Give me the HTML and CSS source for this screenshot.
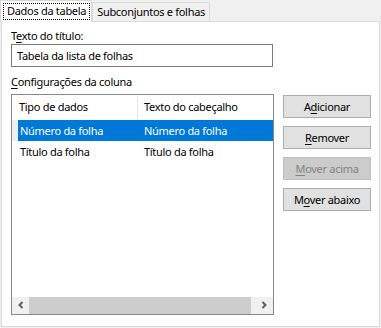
FILE: index.html
```html
<!DOCTYPE html>
<html lang="pt">
<head>
    <meta charset="UTF-8">
    <title>Dados da tabela</title>
    <link rel="stylesheet" href="styles.css">
</head>
<body>
    <div class="tabs">
        <div class="tab active"><span class="focus">Dados da tabela</span></div>
        <div class="tab">Subconjuntos e folhas</div>
    </div>
    <div class="panel">
        <label class="field-label">T<u>e</u>xto do título:</label>
        <div class="text-input">Tabela da lista de folhas</div>

        <label class="field-label second"><u>C</u>onfigurações da coluna</label>
        <div class="columns-area">
            <div class="listview">
                <div class="lv-header">
                    <div class="lv-head first">Tipo de dados</div>
                    <div class="lv-head">Texto do cabeçalho</div>
                </div>
                <div class="lv-body">
                    <div class="lv-row selected">
                        <div class="lv-cell first">Número da folha</div>
                        <div class="lv-cell">Número da folha</div>
                    </div>
                    <div class="lv-row">
                        <div class="lv-cell first">Título da folha</div>
                        <div class="lv-cell">Título da folha</div>
                    </div>
                </div>
                <div class="hscroll">
                    <div class="sb-btn">
                        <svg width="17" height="17" viewBox="0 0 17 17"><polyline points="10.5,5 7.5,8 10.5,11" fill="none" stroke="#606060" stroke-width="2"/></svg>
                    </div>
                    <div class="sb-track"><div class="sb-thumb"></div></div>
                    <div class="sb-btn">
                        <svg width="17" height="17" viewBox="0 0 17 17"><polyline points="6.5,5 9.5,8 6.5,11" fill="none" stroke="#606060" stroke-width="2"/></svg>
                    </div>
                </div>
            </div>
            <div class="buttons">
                <button>A<u>d</u>icionar</button>
                <button><u>R</u>emover</button>
                <button disabled><u>M</u>over acima</button>
                <button>M<u>o</u>ver abaixo</button>
            </div>
        </div>
    </div>
</body>
</html>
```

FILE: styles.css
```css
body {
    margin: 0;
    background-color: #f0f0f0;
    font-family: "Noto Sans", "Open Sans", sans-serif;
    font-size: 11px;
    letter-spacing: -0.3px;
    color: #000;
    width: 381px;
    height: 328px;
    overflow: hidden;
}
u {
    text-decoration-thickness: 1px;
    text-underline-offset: 2px;
}
.tabs {
    display: flex;
    align-items: flex-end;
    height: 21px;
}
.tab {
    box-sizing: border-box;
    height: 19px;
    padding: 0 4px;
    line-height: 17px;
    background-color: #f0f0f0;
    border: 1px solid #d9d9d9;
    border-bottom: none;
}
.tab.active {
    position: relative;
    z-index: 1;
    height: 22px;
    margin-bottom: -1px;
    padding: 2px 1px 0 2px;
    background-color: #fff;
}
.focus {
    display: block;
    height: 15px;
    line-height: 14px;
    padding: 0 3px;
    border: 1px dotted #000;
}
.panel {
    box-sizing: border-box;
    width: 379px;
    height: 306px;
    margin-left: 1px;
    padding: 6px 0 0 9px;
    background-color: #fff;
    border: 1px solid #d9d9d9;
}
.field-label {
    display: block;
    line-height: 16px;
}
.field-label.second {
    margin-top: 7px;
    margin-bottom: 4px;
}
.text-input {
    box-sizing: border-box;
    width: 262px;
    height: 23px;
    line-height: 21px;
    padding: 0 5px;
    border: 1px solid #7a7a7a;
}
.columns-area {
    display: flex;
    align-items: flex-start;
    gap: 9px;
}
.listview {
    box-sizing: border-box;
    width: 263px;
    height: 221px;
    border: 1px solid #828790;
    display: flex;
    flex-direction: column;
}
.lv-header {
    display: flex;
    height: 25px;
}
.lv-head {
    height: 22px;
    margin-top: 1px;
    line-height: 22px;
    padding-left: 6px;
}
.lv-head.first {
    box-sizing: border-box;
    width: 126px;
    padding-left: 7px;
    border-right: 1px solid #e5e5e5;
}
.lv-body {
    flex: 1;
}
.lv-row {
    display: flex;
    height: 21px;
    line-height: 21px;
    border-left: 6px solid transparent;
}
.lv-row.selected {
    background-color: #0078d7;
    background-clip: padding-box;
    border-left-color: #f0f0f0;
    color: #fff;
}
.lv-cell {
    padding-left: 6px;
    white-space: nowrap;
}
.lv-cell.first {
    box-sizing: border-box;
    width: 120px;
    padding-left: 2px;
}
.hscroll {
    display: flex;
    height: 17px;
    background-color: #f0f0f0;
}
.sb-btn {
    width: 17px;
    height: 17px;
}
.sb-btn svg {
    display: block;
}
.sb-track {
    flex: 1;
}
.sb-thumb {
    width: 222px;
    height: 17px;
    background-color: #cdcdcd;
}
.buttons {
    display: flex;
    flex-direction: column;
    gap: 8px;
    margin-top: 1px;
}
button {
    box-sizing: border-box;
    width: 88px;
    height: 23px;
    padding: 0;
    font-family: inherit;
    font-size: 11px;
    letter-spacing: inherit;
    color: #000;
    background-color: #e1e1e1;
    border: 1px solid #adadad;
    border-radius: 0;
}
button:disabled {
    color: #838383;
    background-color: #cccccc;
    border-color: #bfbfbf;
}
```
